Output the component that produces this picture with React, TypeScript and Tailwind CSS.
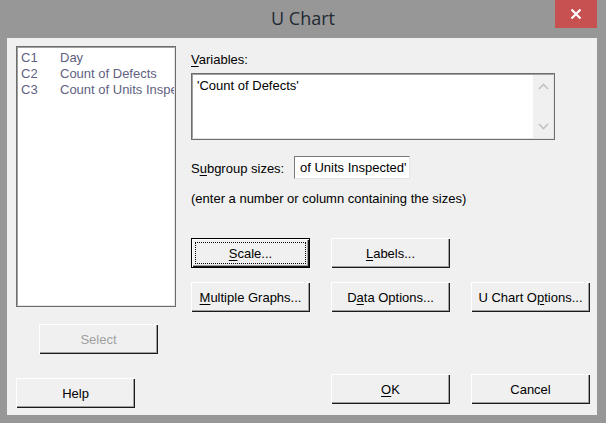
import React from "react";

const bevel =
  "shadow-[inset_1px_1px_#ffffff,inset_-1px_-1px_#1a1a1a,inset_-2px_-2px_#a0a0a0]";

function U({ children }: { children: React.ReactNode }) {
  return <span className="underline underline-offset-2">{children}</span>;
}

function Btn({
  children,
  def,
  disabled,
  className = "",
}: {
  children: React.ReactNode;
  def?: boolean;
  disabled?: boolean;
  className?: string;
}) {
  return (
    <div
      className={`relative w-[119px] h-[30px] shrink-0 bg-[#f0f0f0] flex items-center justify-center text-[13px] ${
        disabled ? "text-[#a0a0a0]" : "text-black"
      } ${def ? "border border-black" : ""} ${bevel} ${className}`}
    >
      {def && (
        <div className="absolute inset-[3px] border border-dotted border-black pointer-events-none" />
      )}
      <span className="leading-none">{children}</span>
    </div>
  );
}

function Chevron({ up }: { up?: boolean }) {
  return (
    <svg width="11" height="7" viewBox="0 0 11 7">
      <path
        d={up ? "M1 6 L5.5 1.5 L10 6" : "M1 1 L5.5 5.5 L10 1"}
        stroke="#c2c2c2"
        strokeWidth="1.6"
        fill="none"
      />
    </svg>
  );
}

export default function App() {
  const items = [
    ["C1", "Day"],
    ["C2", "Count of Defects"],
    ["C3", "Count of Units Inspected"],
  ];
  return (
    <div
      className="w-[606px] h-[423px] bg-[#979797] flex flex-col relative overflow-hidden"
      style={{ fontFamily: '"Liberation Sans", Arial, sans-serif' }}
    >
      {/* title bar */}
      <div className="h-[38px] shrink-0 flex items-start justify-center pt-[7px]">
        <span
          className="text-[18px] leading-[22px] text-[#222a33]"
          style={{ fontFamily: '"Open Sans", "Noto Sans", sans-serif' }}
        >
          U Chart
        </span>
      </div>
      <div className="absolute top-0 right-[9px] w-[42px] h-[28px] bg-[#c75050] flex items-center justify-center">
        <svg width="12" height="12" viewBox="0 0 12 12">
          <path d="M1.5 1.5 L10.5 10.5 M10.5 1.5 L1.5 10.5" stroke="#fff" strokeWidth="2.2" />
        </svg>
      </div>

      {/* client */}
      <div className="mx-[7px] w-[590px] h-[377px] bg-[#f0f0f0] flex">
        {/* left column */}
        <div className="flex flex-col pl-[9px] pt-[8px]">
          <div className="w-[160px] h-[261px] border border-[#6d6d6d] flex">
            <div className="flex-1 border border-t-[#a0a0a0] border-l-[#a0a0a0] border-b-[#e3e3e3] border-r-[#e3e3e3] bg-white overflow-hidden pl-[3px] pt-[2px]">
              {items.map(([c, n]) => (
                <div
                  key={c}
                  className="flex text-[13px] leading-[16px] text-[#5f5f7f] whitespace-nowrap"
                >
                  <span className="w-[39px] shrink-0">{c}</span>
                  <span>{n}</span>
                </div>
              ))}
            </div>
          </div>
          <Btn disabled className="ml-[23px] mt-[17px]">
            Select
          </Btn>
          <Btn className="mt-[24px]">Help</Btn>
        </div>

        {/* right column */}
        <div className="flex flex-col ml-[15px] pt-[14px]">
          <div className="text-[13px] leading-[15px] text-black">
            <U>V</U>ariables:
          </div>
          <div className="mt-[6px] w-[364px] h-[67px] border border-[#6d6d6d] flex">
            <div className="flex-1 flex border border-t-[#a0a0a0] border-l-[#a0a0a0] border-b-[#e3e3e3] border-r-[#e3e3e3] bg-white">
              <div className="flex-1 pl-[4px] pt-[3px] text-[13px] leading-[15px] text-black">
                'Count of Defects'
              </div>
              <div className="w-[20px] bg-[#f0f0f0] flex flex-col items-center justify-between py-[8px]">
                <Chevron up />
                <Chevron />
              </div>
            </div>
          </div>
          <div className="mt-[16px] flex items-center h-[23px]">
            <div className="w-[103px] text-[13px] leading-[15px] text-black pt-[2px]">
              S<U>u</U>bgroup sizes:
            </div>
            <div className="w-[116px] h-[23px] border border-t-[#7a7a7a] border-l-[#7a7a7a] border-b-[#e3e3e3] border-r-[#e3e3e3] bg-white pl-[5px] flex items-center text-[13px] text-black whitespace-nowrap overflow-hidden">
              of Units Inspected'
            </div>
          </div>
          <div className="mt-[12px] text-[13px] leading-[15px] text-black">
            (enter a number or column containing the sizes)
          </div>
          <div className="mt-[32px] flex gap-[21px]">
            <Btn def>
              <U>S</U>cale...
            </Btn>
            <Btn>
              <U>L</U>abels...
            </Btn>
          </div>
          <div className="mt-[14px] flex gap-[21px]">
            <Btn>
              <U>M</U>ultiple Graphs...
            </Btn>
            <Btn>
              D<U>a</U>ta Options...
            </Btn>
            <Btn>
              U Chart O<U>p</U>tions...
            </Btn>
          </div>
          <div className="mt-[62px] ml-[140px] flex gap-[21px]">
            <Btn>
              <U>O</U>K
            </Btn>
            <Btn>Cancel</Btn>
          </div>
        </div>
      </div>
    </div>
  );
}
